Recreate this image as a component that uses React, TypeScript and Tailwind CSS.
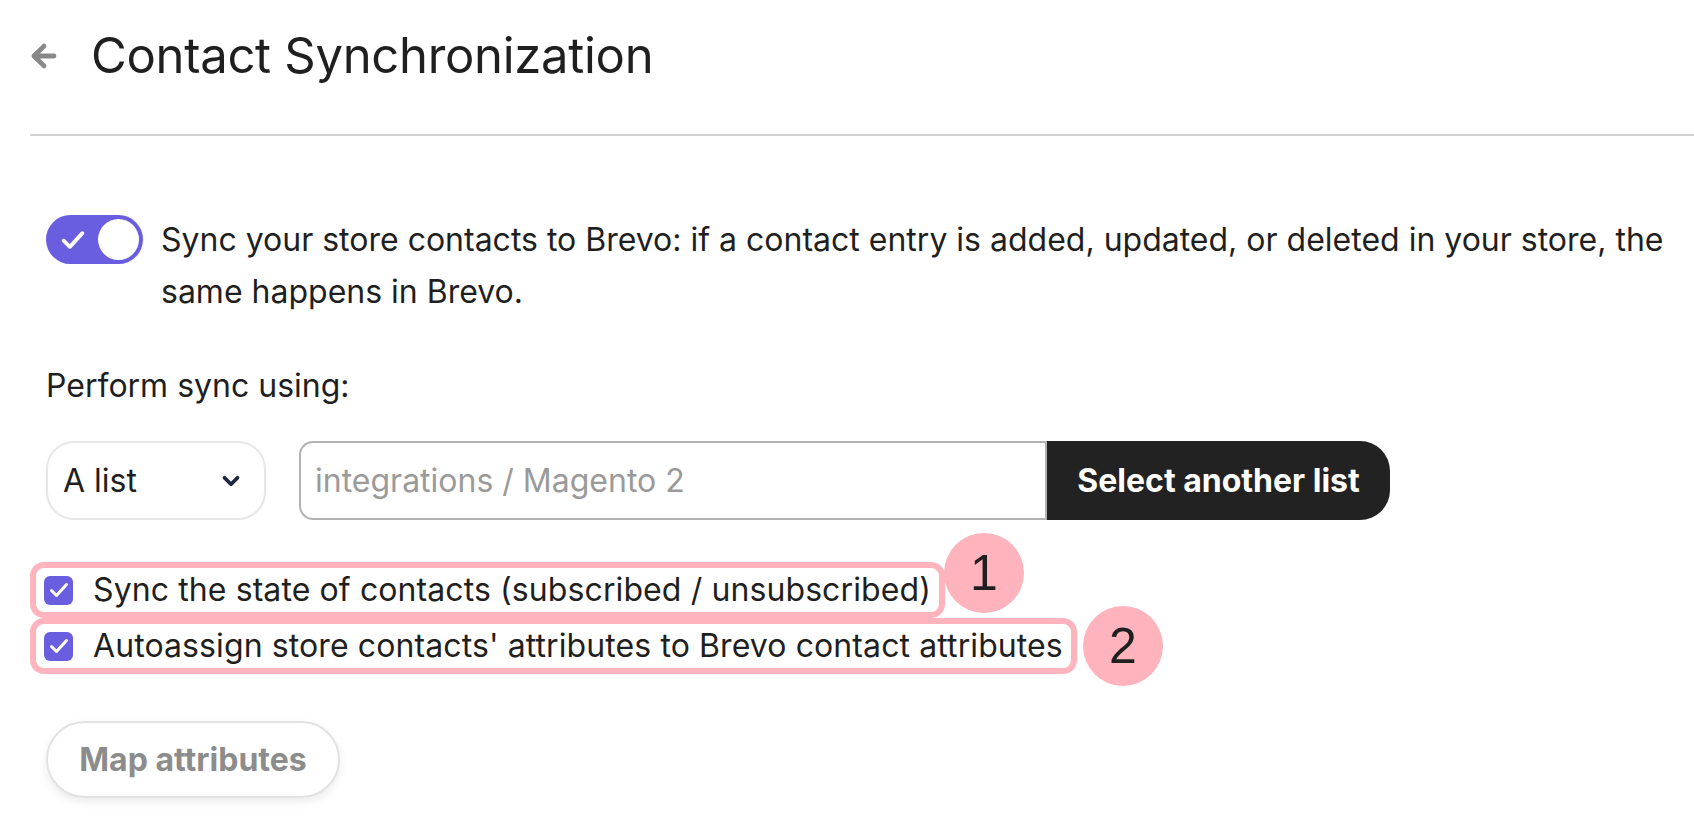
import { ArrowLeft, ChevronDown } from "lucide-react"

function Check({ className }: { className?: string }) {
  return (
    <svg viewBox="0 0 24 24" className={className} fill="none" stroke="currentColor" strokeWidth={3} strokeLinecap="round" strokeLinejoin="round">
      <path d="M4.5 12.5l5 5L19.5 6.5" />
    </svg>
  )
}

function Option({ label, num, badge }: { label: string; num: string; badge: string }) {
  return (
    <div className="relative -ml-[16px] flex h-[56px] w-fit items-center gap-[20px] rounded-[14px] border-[6px] border-[#ffb3bd] bg-white pl-[8px] pr-[8px]">
      <span className="flex h-[29px] w-[29px] items-center justify-center rounded-[6px] bg-[#6a5ee0] text-white">
        <Check className="h-[24px] w-[24px]" />
      </span>
      <span className="whitespace-nowrap text-[32px] leading-none tracking-[0.1px]">{label}</span>
      <span className={`absolute left-full flex h-[80px] w-[80px] items-center justify-center rounded-full bg-[#ffb3bd] font-['Liberation_Sans',sans-serif] text-[50px] font-normal ${badge}`}>
        {num}
      </span>
    </div>
  )
}

export default function App() {
  return (
    <div className="min-h-screen bg-white font-['Inter',sans-serif] text-[#1f1f1f]">
      <header className="mt-[28px] flex h-[56px] items-center pl-[27px]">
        <ArrowLeft className="h-[34px] w-[34px] text-[#888888]" strokeWidth={3.4} />
        <h1 className="ml-[30px] text-[49px] font-normal tracking-[-0.3px]">Contact Synchronization</h1>
      </header>
      <div className="ml-[30px] mt-[50px] border-t-2 border-[#d2d2d2]" />

      <div className="pl-[46px]">
        <div className="mt-[78px] flex items-start gap-[18px]">
          <div className="mt-px flex h-[49px] w-[97px] shrink-0 items-center justify-between rounded-full bg-[#6a5ee0] pl-[12px] pr-[4px]">
            <Check className="h-[30px] w-[30px] text-white" />
            <span className="h-[41px] w-[41px] rounded-full bg-white" />
          </div>
          <p className="text-[32px] leading-[52px]">
            <span className="whitespace-nowrap">
              Sync your store contacts to Brevo: if a contact entry is added, updated, or deleted in your store, the
            </span>
            <br />
            same happens in Brevo.
          </p>
        </div>

        <p className="mt-[42px] text-[32px] leading-[52px]">Perform sync using:</p>

        <div className="mt-[29px] flex h-[79px] items-stretch">
          <div className="flex w-[220px] items-center justify-between rounded-[28px] border-2 border-[#e6e6e6] pl-[15px] pr-[20px]">
            <span className="text-[32px]">A list</span>
            <ChevronDown className="h-[26px] w-[26px] text-[#1d2840]" strokeWidth={3.5} />
          </div>
          <div className="ml-[33px] flex w-[746px] items-center rounded-l-[14px] border-2 border-r-0 border-[#b2b2b2] pl-[14px]">
            <span className="text-[32px] text-[#9a9a9a]">integrations / Magento 2</span>
          </div>
          <button className="flex w-[345px] items-center justify-center rounded-r-[30px] border-l-2 border-[#b2b2b2] bg-[#222222] text-[32px] font-bold text-white">
            Select another list
          </button>
        </div>

        <div className="mt-[42px] flex flex-col">
          <Option label="Sync the state of contacts (subscribed / unsubscribed)" num="1" badge="top-[-35px] ml-[5px]" />
          <Option label="Autoassign store contacts' attributes to Brevo contact attributes" num="2" badge="top-[-18px] ml-[12px]" />
        </div>

        <button className="mt-[47px] flex h-[77px] w-[294px] items-center justify-center rounded-full border-2 border-[#e2e2e2] bg-white text-[32px] font-bold text-[#8c8c8c] shadow-[0_4px_10px_rgba(0,0,0,0.08)]">
          Map attributes
        </button>
      </div>
    </div>
  )
}
